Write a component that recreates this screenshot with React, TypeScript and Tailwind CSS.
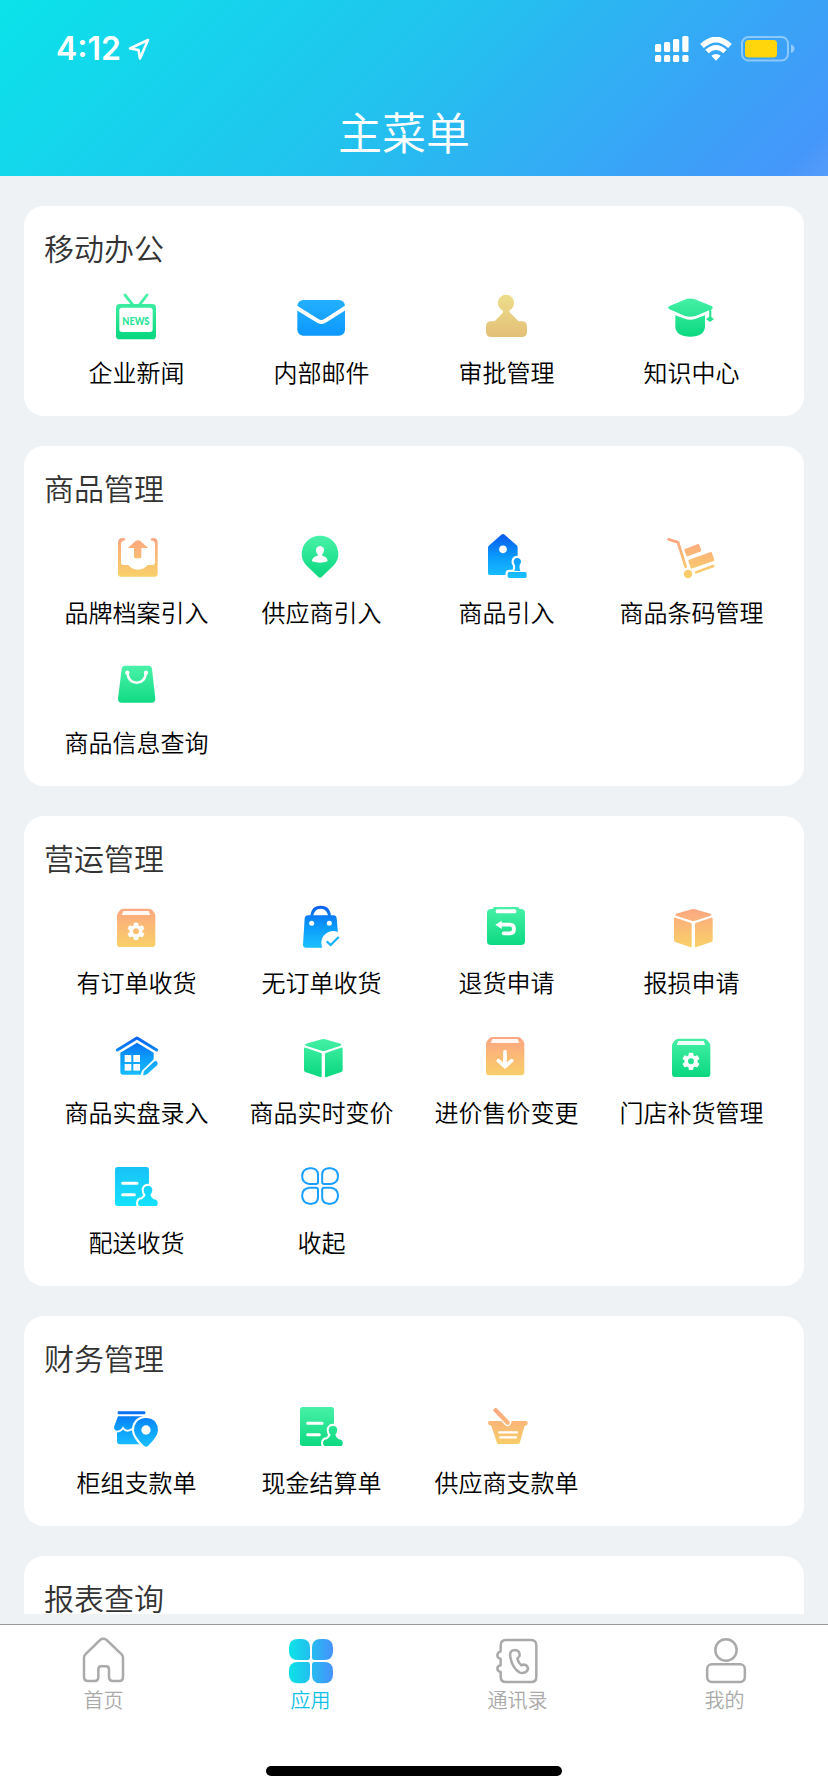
import React, { useId } from "react";

type Stops = string[];

const GREEN: Stops = ["#48f1a7", "#0bd880"];
const ORANGE: Stops = ["#fda583", "#f8d068"];
const BLUE: Stops = ["#0860ee", "#0a9afc", "#1abfff"];
const SKY: Stops = ["#26b2ff", "#0b97ff"];
const GOLD: Stops = ["#ecdc8a", "#e3bf77"];
const CYAN: Stops = ["#18c2f6", "#14e2fd"];

interface GlyphProps {
  x: number;
  y: number;
  stops: Stops;
  horizontal?: boolean;
  children: (paint: string) => React.ReactNode;
}

/* Each glyph is drawn on a 183x180 grid whose origin is (x, y). */
function Glyph({ x, y, stops, horizontal, children }: GlyphProps) {
  const id = "g" + useId().replace(/[^a-zA-Z0-9]/g, "");
  const box = horizontal
    ? { x1: x + 27, x2: x + 159, y1: 0, y2: 0 }
    : { x1: 0, x2: 0, y1: y + 32, y2: y + 152 };
  return (
    <svg width="61" height="60" viewBox={`${x} ${y} 183 180`} className="block shrink-0" aria-hidden="true">
      <defs>
        <linearGradient id={id} gradientUnits="userSpaceOnUse" {...box}>
          {stops.map((c, i) => (
            <stop key={i} offset={i / (stops.length - 1)} stopColor={c} />
          ))}
        </linearGradient>
      </defs>
      {children(`url(#${id})`)}
    </svg>
  );
}

const NewsIcon = () => (
  <Glyph x={258} y={258} stops={GREEN}>
    {(p) => (
      <>
        <path d="M315 285L338 314M381 285L359 314" stroke={p} strokeWidth="8.5" strokeLinecap="round" />
        <rect x="288" y="312" width="120" height="106" rx="11" fill={p} />
        <rect x="298" y="323" width="100" height="73" rx="8" fill="#fff" />
        <text x="307" y="375" textLength="81" lengthAdjust="spacingAndGlyphs" fontSize="33" fill="#26e496" className="font-['Lato',sans-serif] font-black">
          NEWS
        </text>
      </>
    )}
  </Glyph>
);

const MailIcon = () => (
  <Glyph x={813} y={258} stops={SKY}>
    {(p) => (
      <>
        <rect x="832" y="300" width="143" height="107" rx="18" fill={p} />
        <path d="M826 321L892 362Q904 370 916 362L980 321" stroke="#fff" strokeWidth="12" fill="none" />
      </>
    )}
  </Glyph>
);

const StampIcon = () => (
  <Glyph x={168} y={258} stops={GOLD}>
    {(p) => (
      <g fill={p}>
        <circle cx="258" cy="309" r="24.5" />
        <path d="M247 330Q251 335 247 340L224 364H214Q198 364 198 380V395Q198 411 214 411H305Q321 411 321 395V380Q321 364 305 364H296L270 338Q266 334 270 330Z" />
      </g>
    )}
  </Glyph>
);

const CapIcon = () => (
  <Glyph x={723} y={258} stops={GREEN}>
    {(p) => (
      <g fill={p}>
        <path d="M747 319L797 298Q811 293 825 298L876 319Q881 323 876 327L827 348Q811 353 795 348L747 327Q742 323 747 319Z" />
        <path d="M766 346L797 357Q811 361 825 357L855 346V382Q852 410 811 410Q769 410 766 382Z" />
        <path d="M867.500 325H874V351L882 357L870 366L858 357L867.500 351Z" />
      </g>
    )}
  </Glyph>
);

const TrayIcon = () => (
  <Glyph x={258} y={78} stops={ORANGE}>
    {(p) => (
      <g fill={p}>
        <path d="M308 114Q294 114 294 128V221Q294 230 303 230H404Q413 230 413 221V128Q413 114 400 114Q391 114 392 119Q393 122 400 123Q405 124 405 132V187Q405 195 397 195H383Q372 209 354 209Q336 209 325 195H311Q303 195 303 187V132Q303 124 309 123Q316 122 316 118Q316 114 308 114Z" />
        <path d="M347 123Q354 118 361 123L385 144H364V171Q364 175 360 175H346Q342 175 342 171V144H323Z" />
      </g>
    )}
  </Glyph>
);

const PinPersonIcon = () => (
  <Glyph x={813} y={78} stops={GREEN}>
    {(p) => (
      <>
        <path d="M900 107A55 55 0 0 1 955 162Q955 182 940 197L905 231Q900 236 895 231L860 197Q845 182 845 162A55 55 0 0 1 900 107Z" fill={p} />
        <path d="M900 138Q912 139 912 151Q911 159 907 162V167Q923 170 923 184Q912 188 900 188Q887 188 876 184Q876 170 893 167V162Q888 159 888 151Q888 139 900 138Z" fill="#fff" />
      </>
    )}
  </Glyph>
);

const HouseStampIcon = () => {
  const handle = "M292 174Q303 175 303 186Q302 191 299 195Q297 204 301 213H283Q287 204 285 195Q281 191 281 186Q281 175 292 174Z";
  return (
    <Glyph x={168} y={78} stops={BLUE}>
      {(p) => (
        <>
          <path d="M204 143Q204 139 208 136L244 104Q249 100 254 104L290 136Q293 139 293 143V225H209Q204 225 204 220Z" fill={p} />
          <circle cx="249" cy="148" r="11.500" fill="#fff" />
          <g fill="#fff" stroke="#fff" strokeWidth="13">
            <path d={handle} />
            <rect x="263" y="216" width="57" height="18" rx="5" />
          </g>
          <path d={handle} fill={p} />
          <rect x="263" y="216" width="57" height="18" rx="5" fill={p} />
        </>
      )}
    </Glyph>
  );
};

const TrolleyIcon = () => (
  <Glyph x={723} y={78} stops={ORANGE}>
    {(p) => (
      <g fill={p} stroke={p} strokeLinejoin="round" strokeLinecap="round">
        <path d="M746 118L774 127L797 200" fill="none" strokeWidth="8.500" />
        <circle cx="804" cy="222" r="12.500" stroke="none" />
        <path d="M796 150L835 135L841 152L802 166Z" strokeWidth="6" />
        <path d="M808 182L873 159L880 180L815 203Z" strokeWidth="6" />
        <path d="M828 217L880 198" strokeWidth="7.500" />
      </g>
    )}
  </Glyph>
);

const TallBagIcon = () => (
  <Glyph x={258} y={468} stops={GREEN}>
    {(p) => (
      <>
        <path d="M316 497H385Q395 497 396 507L406 596Q406 608 395 608H305Q294 608 294 596L305 507Q306 497 316 497Z" fill={p} />
        <path d="M322 518Q325 548 350 548Q375 548 378 518" fill="none" stroke="#fff" strokeWidth="7.500" />
        <circle cx="322" cy="518" r="6.500" fill="#fff" />
        <circle cx="378" cy="518" r="6.500" fill="#fff" />
      </>
    )}
  </Glyph>
);

const boxShape =
  "M310 296H387Q393 296 397 301L403 308Q406 312 406 318V401Q406 411 396 411H301Q291 411 291 401V318Q291 312 294 308L300 301Q304 296 310 296Z";

const GearBoxIcon = ({ stops, hub }: { stops: Stops; hub: string }) => (
  <Glyph x={258} y={258} stops={stops}>
    {(p) => (
      <>
        <path d={boxShape} fill={p} />
        <path d="M310 303H386L391 315H305Z" fill="#fff" opacity=".9" />
        <g fill="#fff">
          <circle cx="348" cy="364" r="19.500" />
          {[0, 60, 120].map((a) => (
            <rect key={a} x="341" y="338" width="14" height="52" rx="3" transform={`rotate(${a} 348 364)`} />
          ))}
        </g>
        <circle cx="348" cy="364" r="9" fill={hub} />
      </>
    )}
  </Glyph>
);

const DownBoxIcon = () => (
  <Glyph x={261} y={263} stops={ORANGE}>
    {(p) => (
      <>
        <path d={boxShape} fill={p} />
        <path d="M310 302H386L391 314H305Z" fill="#fff" opacity=".9" />
        <path d="M348 340V384M328 367L348 385L368 367" fill="none" stroke="#fff" strokeWidth="11" strokeLinecap="round" strokeLinejoin="round" />
      </>
    )}
  </Glyph>
);

const BagCheckIcon = () => (
  <Glyph x={813} y={258} stops={BLUE}>
    {(p) => (
      <>
        <path d="M875 322Q877 292 902 292Q927 292 929 322" fill="none" stroke={p} strokeWidth="9" />
        <path d="M865 316H940Q949 316 950 325L957 403Q958 413 948 413H858Q849 413 849 404L854 325Q855 316 865 316Z" fill={p} />
        <circle cx="875" cy="340" r="7.500" fill="#fff" />
        <circle cx="928" cy="340" r="7.500" fill="#fff" />
        <circle cx="940" cy="399" r="36" fill="#fff" />
        <path d="M920 394L932 405L956 381" fill="none" stroke="#15b2fb" strokeWidth="6.500" />
      </>
    )}
  </Glyph>
);

const ReturnIcon = () => (
  <Glyph x={168} y={258} stops={GREEN}>
    {(p) => (
      <>
        <rect x="218" y="291" width="80" height="20" rx="7" fill={p} />
        <rect x="201" y="297" width="114" height="108" rx="12" fill={p} />
        <rect x="227" y="298" width="62" height="12" rx="5" fill="#fff" />
        <path d="M242 344H270Q282 344 282 357Q282 370 270 370H251" fill="none" stroke="#fff" strokeWidth="11.500" strokeLinecap="round" />
        <path d="M226 344L245 332V357Z" fill="#fff" />
      </>
    )}
  </Glyph>
);

const CubeIcon = ({ stops }: { stops: Stops }) => (
  <Glyph x={723} y={258} stops={stops}>
    {(p) => (
      <g fill={p}>
        <path d="M768 311.500L815 298Q820 296.500 825 298L872 311.500Q877 314 872 317L825 332Q820 334 815 332L768 317Q763 314 768 311.500Z" />
        <path d="M762 326Q762 321 767 323L811 338Q815 339 815 343V408Q815 413 810 411L766 396Q762 394 762 390Z" />
        <path d="M878 326Q878 321 873 323L829 338Q825 339 825 343V408Q825 413 830 411L874 396Q878 394 878 390Z" />
      </g>
    )}
  </Glyph>
);

const HouseEditIcon = () => (
  <Glyph x={258} y={48} stops={BLUE}>
    {(p) => (
      <>
        <path d="M292 120L351 84L410 120" fill="none" stroke={p} strokeWidth="9" strokeLinecap="round" strokeLinejoin="round" />
        <path d="M301 128L351 98L401 128V194H309Q301 194 301 186Z" fill={p} />
        <g fill="#fff">
          <rect x="314" y="135" width="20" height="21" />
          <rect x="340" y="135" width="20" height="21" />
          <rect x="314" y="162" width="20" height="20" />
          <rect x="340" y="162" width="20" height="20" />
          <path d="M362 196L366 182L403 146L418 150L410 200Z" />
        </g>
        <path d="M369 196L372 183L402 155Q408 151 412 156Q415 161 411 166L382 192Q376 196 369 196Z" fill={p} />
      </>
    )}
  </Glyph>
);

const DocStampIcon = ({ stops }: { stops: Stops }) => {
  const stamp =
    "M384 527Q397 528 397 541Q396 549 391 554Q393 562 401 568Q413 569 413 578Q414 588 406 588H361Q354 588 354 579Q355 568 366 568Q375 561 377 554Q371 549 371 541Q371 528 384 527Z";
  return (
    <Glyph x={258} y={438} stops={stops}>
      {(p) => (
        <>
          <rect x="285" y="471" width="102" height="117" rx="8" fill={p} />
          <path d="M308 520H351M308 554H343" stroke="#fff" strokeWidth="9" strokeLinecap="round" />
          <path d={stamp} fill="#fff" stroke="#fff" strokeWidth="12" />
          <path d={stamp} fill={p} />
        </>
      )}
    </Glyph>
  );
};

const CollapseIcon = () => {
  const petal = "M868 474.500H875Q894 476 894 494V516Q894 522 888 522H868Q846.500 519 846.500 498Q847 477 868 474.500Z";
  return (
    <Glyph x={813} y={438} stops={SKY}>
      {() => (
        <g fill="none" stroke="#1a9fff" strokeWidth="6">
          <path d={petal} />
          <path d={petal} transform="matrix(-1 0 0 1 1800.500 0)" />
          <path d={petal} transform="matrix(1 0 0 -1 0 1055.500)" />
          <path d={petal} transform="matrix(-1 0 0 -1 1800.500 1055.500)" />
        </g>
      )}
    </Glyph>
  );
};

const ShopPinIcon = () => {
  const pin = "M378 354Q396 354 406 366Q414 376 414 391Q413 410 384 438Q378 443 372 438Q343 410 342 391Q342 376 350 366Q361 354 378 354Z";
  return (
    <Glyph x={258} y={288} stops={BLUE}>
      {(p) => (
        <>
          <rect x="293" y="333.500" width="83" height="9" rx="3" fill={p} />
          <path d="M294 349H372V433H300Q291 433 291 424V393Q282 390 282 381Z" fill={p} />
          <path d="M283 394Q300 398 309 384Q319 398 334 388L342 392" fill="none" stroke="#fff" strokeWidth="5.500" />
          <path d={pin} fill="#fff" stroke="#fff" strokeWidth="13" />
          <path d={pin} fill={p} />
          <circle cx="378" cy="390" r="14" fill="#fff" />
        </>
      )}
    </Glyph>
  );
};

const BasketIcon = () => (
  <Glyph x={1368} y={288} stops={ORANGE}>
    {(p) => (
      <>
        <path d="M1409 363H1518Q1523 363 1523 369Q1523 377 1514 377L1499 429Q1498 432 1495 432H1435Q1432 432 1431 429L1414 377Q1404 376 1404 369Q1404 363 1409 363Z" fill={p} />
        <path d="M1427 330L1463 367" stroke="#fff" strokeWidth="22" strokeLinecap="round" />
        <path d="M1427 331L1463 368" stroke={p} strokeWidth="13" strokeLinecap="round" />
        <path d="M1438 397H1491M1441 412H1488" stroke="#fff" strokeWidth="7" strokeLinecap="round" />
      </>
    )}
  </Glyph>
);

const HomeTab = () => (
  <Glyph x={219} y={270} stops={["#aaa", "#aaa"]}>
    {() => (
      <path
        d="M300 300Q310 293 320 300L365 343Q369 347 369 353V411Q369 423 358 423H339Q327 423 327 411V388Q327 379 318 379H304Q295 379 295 388V411Q295 423 284 423H264Q252 423 252 411V353Q252 347 256 343Z"
        fill="none"
        stroke="#aaa"
        strokeWidth="7.500"
      />
    )}
  </Glyph>
);

const AppsTab = () => (
  <Glyph x={840} y={270} stops={["#0ce3e6", "#25bdf0", "#4692fc"]} horizontal>
    {(p) => (
      <g fill={p}>
        <path d="M894 297H904Q930 297 930 323V353Q930 360 923 360H893Q867 360 867 334V324Q867 297 894 297Z" />
        <path d="M972 297H962Q936 297 936 323V353Q936 360 943 360H973Q999 360 999 334V324Q999 297 972 297Z" />
        <path d="M894 430H904Q930 430 930 404V373Q930 366 923 366H893Q867 366 867 392V403Q867 430 894 430Z" />
        <path d="M972 430H962Q936 430 936 404V373Q936 366 943 366H973Q999 366 999 392V403Q999 430 972 430Z" />
      </g>
    )}
  </Glyph>
);

const ContactsTab = () => (
  <Glyph x={219} y={270} stops={["#aaa", "#aaa"]}>
    {() => (
      <g fill="none" stroke="#aaa" strokeWidth="7.500" strokeLinejoin="round">
        <path d="M260 334V316Q260 300 276 300H351Q367 300 367 316V410Q367 426 351 426H276Q260 426 260 410V396Q250 393 250 386Q250 378 260 376V357Q250 354 250 346Q250 337 260 334Z" />
        <path d="M289 352Q285 331 302 330Q317 331 317 345Q317 351 310 356Q313 368 322 376Q332 371 339 378Q345 386 339 393Q330 402 316 397Q295 384 289 352Z" />
      </g>
    )}
  </Glyph>
);

const ProfileTab = () => (
  <Glyph x={840} y={270} stops={["#aaa", "#aaa"]}>
    {() => (
      <g fill="none" stroke="#aaa" strokeWidth="7.500">
        <circle cx="936" cy="330" r="32" />
        <rect x="879.500" y="373" width="113" height="53" rx="14" />
      </g>
    )}
  </Glyph>
);

interface Item {
  label: string;
  icon: React.ReactNode;
}

const sections: { title: string; items: Item[] }[] = [
  {
    title: "移动办公",
    items: [
      { label: "企业新闻", icon: <NewsIcon /> },
      { label: "内部邮件", icon: <MailIcon /> },
      { label: "审批管理", icon: <StampIcon /> },
      { label: "知识中心", icon: <CapIcon /> },
    ],
  },
  {
    title: "商品管理",
    items: [
      { label: "品牌档案引入", icon: <TrayIcon /> },
      { label: "供应商引入", icon: <PinPersonIcon /> },
      { label: "商品引入", icon: <HouseStampIcon /> },
      { label: "商品条码管理", icon: <TrolleyIcon /> },
      { label: "商品信息查询", icon: <TallBagIcon /> },
    ],
  },
  {
    title: "营运管理",
    items: [
      { label: "有订单收货", icon: <GearBoxIcon stops={ORANGE} hub="#fabd74" /> },
      { label: "无订单收货", icon: <BagCheckIcon /> },
      { label: "退货申请", icon: <ReturnIcon /> },
      { label: "报损申请", icon: <CubeIcon stops={ORANGE} /> },
      { label: "商品实盘录入", icon: <HouseEditIcon /> },
      { label: "商品实时变价", icon: <CubeIcon stops={GREEN} /> },
      { label: "进价售价变更", icon: <DownBoxIcon /> },
      { label: "门店补货管理", icon: <GearBoxIcon stops={GREEN} hub="#25e292" /> },
      { label: "配送收货", icon: <DocStampIcon stops={CYAN} /> },
      { label: "收起", icon: <CollapseIcon /> },
    ],
  },
  {
    title: "财务管理",
    items: [
      { label: "柜组支款单", icon: <ShopPinIcon /> },
      { label: "现金结算单", icon: <DocStampIcon stops={GREEN} /> },
      { label: "供应商支款单", icon: <BasketIcon /> },
    ],
  },
  { title: "报表查询", items: [] },
];

const tabs = [
  { label: "首页", icon: <HomeTab />, active: false },
  { label: "应用", icon: <AppsTab />, active: true },
  { label: "通讯录", icon: <ContactsTab />, active: false },
  { label: "我的", icon: <ProfileTab />, active: false },
];

function StatusBar() {
  return (
    <div className="flex h-[98px] items-center pr-[33px] pl-[56px] text-white">
      <span className="font-['Inter',sans-serif] text-[32px] leading-[40px] font-semibold">4:12</span>
      <svg width="24" height="24" viewBox="0 0 24 24" className="ml-[6px]" aria-hidden="true">
        <path d="M21 3L3 11.500L11.500 13L13 21.500Z" fill="none" stroke="#fff" strokeWidth="2.600" strokeLinejoin="round" />
      </svg>
      <div className="ml-auto flex items-center">
        <svg width="34" height="26" viewBox="0 0 34 26" aria-hidden="true">
          <g fill="#fff">
            <rect x="0" y="8" width="6.200" height="8" rx="1.500" />
            <rect x="9" y="6" width="6.200" height="10" rx="1.500" />
            <rect x="18" y="3" width="6.200" height="13" rx="1.500" />
            <rect x="27.300" y="0" width="6.200" height="16" rx="1.500" />
            <rect x="0" y="19" width="6.200" height="7" rx="1.500" />
            <rect x="9" y="19" width="6.200" height="7" rx="1.500" />
            <rect x="18" y="19" width="6.200" height="7" rx="1.500" />
            <rect x="27.300" y="19" width="6.200" height="7" rx="1.500" />
          </g>
        </svg>
        <svg width="32" height="24" viewBox="0 0 32 24" className="ml-[11px]" aria-hidden="true">
          <path d="M2 9Q16 -4 30 9" fill="none" stroke="#fff" strokeWidth="5.500" />
          <path d="M7 14.500Q16 6.500 25 14.500" fill="none" stroke="#fff" strokeWidth="5" />
          <path d="M11.300 18.800Q16 15 20.700 18.800L16 23.800Z" fill="#fff" />
        </svg>
        <svg width="54" height="26" viewBox="0 0 54 26" className="ml-[9px]" aria-hidden="true">
          <rect x="1" y="1" width="46" height="23.500" rx="6.500" fill="none" stroke="#fff" strokeOpacity=".42" strokeWidth="2" />
          <rect x="4" y="4" width="32" height="17.500" rx="3.500" fill="#ffd60c" />
          <path d="M50 8.500Q53.500 10 53.500 12.800Q53.500 15.500 50 17Z" fill="#fff" opacity=".45" />
        </svg>
      </div>
    </div>
  );
}

export default function App() {
  return (
    <div className="flex h-[1792px] w-[828px] flex-col overflow-hidden bg-[#eef2f5] font-['Noto_Sans_CJK_SC',sans-serif] font-[350]">
      <header className="h-[176px] shrink-0 bg-[linear-gradient(135deg,#0be3ea_0%,#22c2ee_48%,#39a4f7_79%,#4497fa_95%,#559cfb_100%)]">
        <StatusBar />
        <h1 className="pr-[20px] text-center text-[44px] leading-[66px] text-white">主菜单</h1>
      </header>

      <main className="flex h-[1438px] shrink-0 flex-col gap-[30px] overflow-hidden px-6 pt-[30px]">
        {sections.map((s) => (
          <section key={s.title} className="shrink-0 rounded-[20px] bg-white px-5 pb-5">
            <h2 className="h-[60px] pt-[19px] text-[30px] leading-[44px] text-[#333]">{s.title}</h2>
            <div className="grid min-h-[130px] grid-cols-4">
              {s.items.map((it) => (
                <div key={it.label} className="flex h-[130px] flex-col items-center pt-5">
                  {it.icon}
                  <span className="mt-[8px] text-[24px] leading-[36px] whitespace-nowrap text-black">{it.label}</span>
                </div>
              ))}
            </div>
          </section>
        ))}
      </main>

      <nav className="mt-[10px] flex h-[168px] shrink-0 flex-col border-t border-[#999] bg-white">
        <div className="grid grid-cols-4 pt-[5px]">
          {tabs.map((t) => (
            <div key={t.label} className="flex flex-col items-center">
              {t.icon}
              <span className={t.active ? "-mt-[5px] text-[20px] leading-[30px] text-[#12c0e6]" : "-mt-[5px] text-[20px] leading-[30px] text-[#aaa]"}>
                {t.label}
              </span>
            </div>
          ))}
        </div>
        <div className="mt-auto mb-4 h-[10px] w-[296px] self-center rounded-full bg-black" />
      </nav>
    </div>
  );
}
